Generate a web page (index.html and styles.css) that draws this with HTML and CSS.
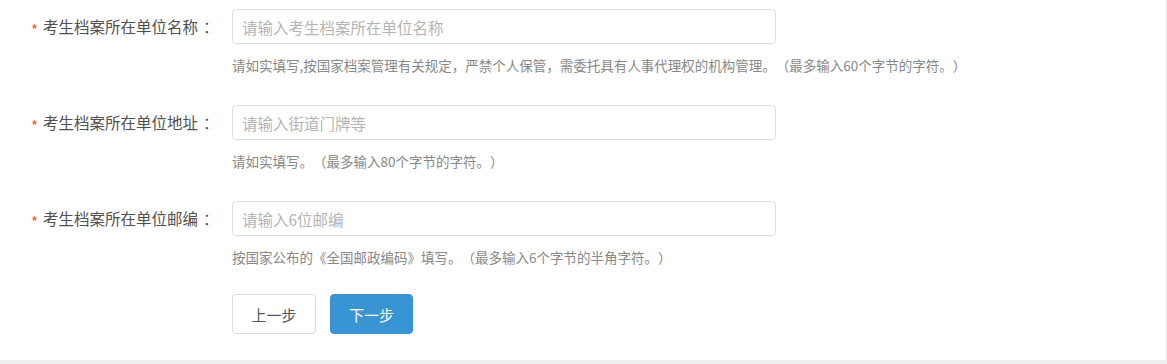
FILE: index.html
```html
<!DOCTYPE html>
<html lang="zh-CN">
<head>
    <meta charset="UTF-8">
    <title>考生档案信息</title>
    <link rel="stylesheet" href="styles.css">
</head>
<body>

    <div class="panel">
        <form class="info-form">
            <div class="form-row">
                <label class="form-label"><span class="required">*</span>考生档案所在单位名称<span class="colon">：</span></label>
                <div class="form-field">
                    <input type="text" class="form-input" placeholder="请输入考生档案所在单位名称">
                    <p class="help">请如实填写,按国家档案管理有关规定，严禁个人保管，需委托具有人事代理权的机构管理。（最多输入60个字节的字符。）</p>
                </div>
            </div>

            <div class="form-row">
                <label class="form-label"><span class="required">*</span>考生档案所在单位地址<span class="colon">：</span></label>
                <div class="form-field">
                    <input type="text" class="form-input" placeholder="请输入街道门牌等">
                    <p class="help">请如实填写。（最多输入80个字节的字符。）</p>
                </div>
            </div>

            <div class="form-row">
                <label class="form-label"><span class="required">*</span>考生档案所在单位邮编<span class="colon">：</span></label>
                <div class="form-field">
                    <input type="text" class="form-input" placeholder="请输入6位邮编">
                    <p class="help">按国家公布的《全国邮政编码》填写。（最多输入6个字节的半角字符。）</p>
                </div>
            </div>

            <div class="form-actions">
                <button type="button" class="btn btn-default">上一步</button>
                <button type="button" class="btn btn-primary">下一步</button>
            </div>
        </form>
    </div>

</body>
</html>
```

FILE: styles.css
```css
body {
    margin: 0;
    padding: 0;
    background: #eef0f0;
    font-family: "Noto Sans CJK SC", "Noto Sans", sans-serif;
    color: #444;
    text-spacing-trim: space-all;
}

.panel {
    background: #fff;
    height: 360px;
    border-right: 1px solid #e4e6e6;
    box-sizing: border-box;
}

.info-form {
    padding-top: 9px;
}

.form-row {
    display: flex;
    margin-bottom: 30px;
}

.form-label {
    width: 232px;
    box-sizing: border-box;
    padding-left: 31px;
    height: 35px;
    line-height: 35px;
    font-size: 15.5px;
    color: #505050;
    white-space: nowrap;
}

.required {
    color: #ec5b3a;
    margin-right: 5px;
    font-size: 15px;
    vertical-align: -3px;
}

.colon {
    margin-left: 5px;
}

.form-field {
    display: flex;
    flex-direction: column;
}

.form-input {
    width: 544px;
    height: 35px;
    box-sizing: border-box;
    border: 1px solid #dcdcdc;
    border-radius: 4px;
    padding: 0 9px;
    font-size: 15.5px;
    font-family: inherit;
    color: #444;
    outline: none;
}

.form-input::placeholder {
    color: #b4b4b4;
}

.help {
    margin: 11px 0 0;
    line-height: 20px;
    font-size: 13.5px;
    color: #888;
    white-space: nowrap;
}

.form-actions {
    display: flex;
    gap: 14px;
    padding-left: 232px;
    margin-top: -3px;
}

.btn {
    height: 40px;
    width: 84px;
    border-radius: 4px;
    font-size: 15px;
    font-family: inherit;
    cursor: pointer;
}

.btn-default {
    background: #fff;
    border: 1px solid #dcdcdc;
    color: #555;
}

.btn-primary {
    width: 83px;
    background: #3894d2;
    border: 1px solid #3894d2;
    color: #fff;
}
```
